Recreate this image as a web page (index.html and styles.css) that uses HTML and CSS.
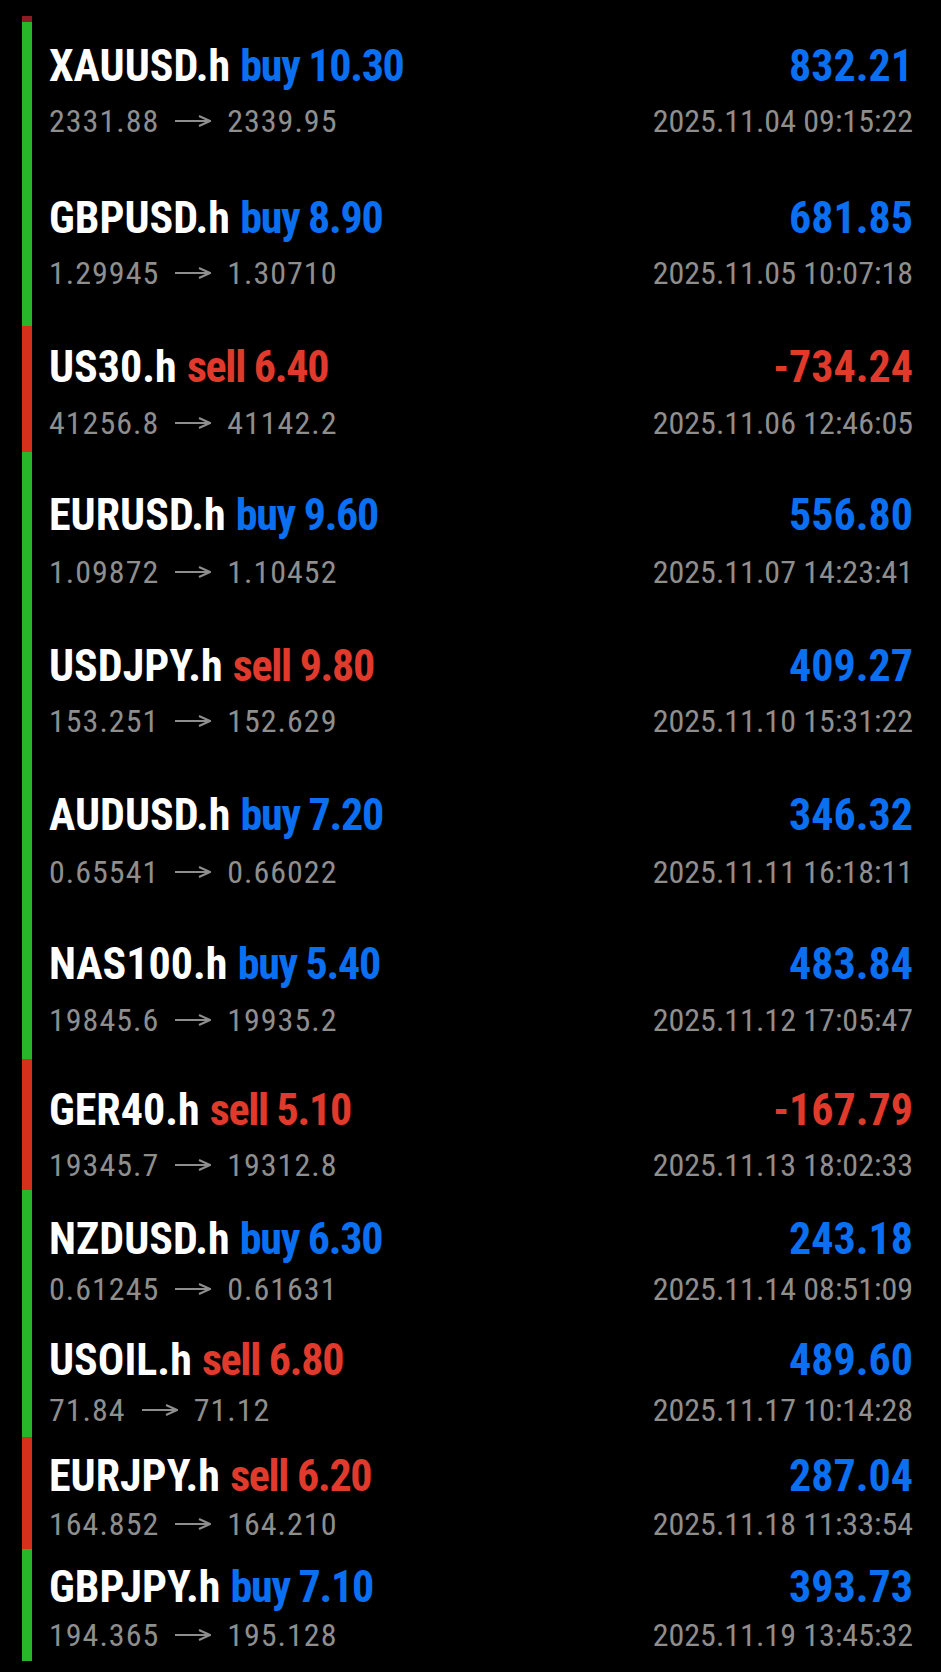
FILE: index.html
```html
<!DOCTYPE html>
<html>
<head>
    <title>Closed Positions</title>
    <link rel="stylesheet" href="styles.css">
</head>
<body>

    <div class="trades">
        <div class="trade">
            <div class="top"><span><span class="symbol">XAUUSD.h</span> <span class="buy side">buy 10.30</span></span><span class="buy">832.21</span></div>
            <div class="bottom"><span class="prices">2331.88 <svg class="arrow" viewBox="0 0 36 12"><path d="M0 6H35M24 1L35 6L24 11"/></svg> 2339.95</span><span>2025.11.04 09:15:22</span></div>
        </div>
        <div class="trade">
            <div class="top"><span><span class="symbol">GBPUSD.h</span> <span class="buy side">buy 8.90</span></span><span class="buy">681.85</span></div>
            <div class="bottom"><span class="prices">1.29945 <svg class="arrow" viewBox="0 0 36 12"><path d="M0 6H35M24 1L35 6L24 11"/></svg> 1.30710</span><span>2025.11.05 10:07:18</span></div>
        </div>
        <div class="trade red">
            <div class="top"><span><span class="symbol">US30.h</span> <span class="sell side">sell 6.40</span></span><span class="sell">-734.24</span></div>
            <div class="bottom"><span class="prices">41256.8 <svg class="arrow" viewBox="0 0 36 12"><path d="M0 6H35M24 1L35 6L24 11"/></svg> 41142.2</span><span>2025.11.06 12:46:05</span></div>
        </div>
        <div class="trade">
            <div class="top"><span><span class="symbol">EURUSD.h</span> <span class="buy side">buy 9.60</span></span><span class="buy">556.80</span></div>
            <div class="bottom"><span class="prices">1.09872 <svg class="arrow" viewBox="0 0 36 12"><path d="M0 6H35M24 1L35 6L24 11"/></svg> 1.10452</span><span>2025.11.07 14:23:41</span></div>
        </div>
        <div class="trade">
            <div class="top"><span><span class="symbol">USDJPY.h</span> <span class="sell side">sell 9.80</span></span><span class="buy">409.27</span></div>
            <div class="bottom"><span class="prices">153.251 <svg class="arrow" viewBox="0 0 36 12"><path d="M0 6H35M24 1L35 6L24 11"/></svg> 152.629</span><span>2025.11.10 15:31:22</span></div>
        </div>
        <div class="trade">
            <div class="top"><span><span class="symbol">AUDUSD.h</span> <span class="buy side">buy 7.20</span></span><span class="buy">346.32</span></div>
            <div class="bottom"><span class="prices">0.65541 <svg class="arrow" viewBox="0 0 36 12"><path d="M0 6H35M24 1L35 6L24 11"/></svg> 0.66022</span><span>2025.11.11 16:18:11</span></div>
        </div>
        <div class="trade">
            <div class="top"><span><span class="symbol">NAS100.h</span> <span class="buy side">buy 5.40</span></span><span class="buy">483.84</span></div>
            <div class="bottom"><span class="prices">19845.6 <svg class="arrow" viewBox="0 0 36 12"><path d="M0 6H35M24 1L35 6L24 11"/></svg> 19935.2</span><span>2025.11.12 17:05:47</span></div>
        </div>
        <div class="trade red">
            <div class="top"><span><span class="symbol">GER40.h</span> <span class="sell side">sell 5.10</span></span><span class="sell">-167.79</span></div>
            <div class="bottom"><span class="prices">19345.7 <svg class="arrow" viewBox="0 0 36 12"><path d="M0 6H35M24 1L35 6L24 11"/></svg> 19312.8</span><span>2025.11.13 18:02:33</span></div>
        </div>
        <div class="trade">
            <div class="top"><span><span class="symbol">NZDUSD.h</span> <span class="buy side">buy 6.30</span></span><span class="buy">243.18</span></div>
            <div class="bottom"><span class="prices">0.61245 <svg class="arrow" viewBox="0 0 36 12"><path d="M0 6H35M24 1L35 6L24 11"/></svg> 0.61631</span><span>2025.11.14 08:51:09</span></div>
        </div>
        <div class="trade">
            <div class="top"><span><span class="symbol">USOIL.h</span> <span class="sell side">sell 6.80</span></span><span class="buy">489.60</span></div>
            <div class="bottom"><span class="prices">71.84 <svg class="arrow" viewBox="0 0 36 12"><path d="M0 6H35M24 1L35 6L24 11"/></svg> 71.12</span><span>2025.11.17 10:14:28</span></div>
        </div>
        <div class="trade red">
            <div class="top"><span><span class="symbol">EURJPY.h</span> <span class="sell side">sell 6.20</span></span><span class="buy">287.04</span></div>
            <div class="bottom"><span class="prices">164.852 <svg class="arrow" viewBox="0 0 36 12"><path d="M0 6H35M24 1L35 6L24 11"/></svg> 164.210</span><span>2025.11.18 11:33:54</span></div>
        </div>
        <div class="trade">
            <div class="top"><span><span class="symbol">GBPJPY.h</span> <span class="buy side">buy 7.10</span></span><span class="buy">393.73</span></div>
            <div class="bottom"><span class="prices">194.365 <svg class="arrow" viewBox="0 0 36 12"><path d="M0 6H35M24 1L35 6L24 11"/></svg> 195.128</span><span>2025.11.19 13:45:32</span></div>
        </div>
    </div>

</body>
</html>
```

FILE: styles.css
```css
body {
    background-color: #000;
    color: #fff;
    font-family: "Liberation Sans Narrow", "Roboto Condensed", "DejaVu Sans Condensed", "Liberation Sans", sans-serif;
    margin: 0;
}

.trades {
    padding: 16px 28px 0 22px;
}

/* dark tick above the bar */
.trades::before {
    content: "";
    display: block;
    width: 10px;
    height: 6px;
    background-color: #8a1c22;
}

.trade {
    box-sizing: border-box;
    border-left: 10px solid #27b52a;
    padding-left: 17px;
    padding-top: 28px;
    height: 149px;
}

.trade.red {
    border-left-color: #d5301c;
}

.top {
    display: flex;
    justify-content: space-between;
    align-items: baseline;
    font-size: 44px;
    line-height: 44px;
    font-weight: bold;
    white-space: nowrap;
}

.symbol {
    color: #fff;
}

.side {
    letter-spacing: -1.3px;
}

.buy {
    color: #0b6ff2;
}

.sell {
    color: #e03a2c;
}

.bottom {
    display: flex;
    justify-content: space-between;
    align-items: center;
    font-size: 32px;
    line-height: 32px;
    color: #8e8e8e;
    margin-top: 16px;
    white-space: nowrap;
}

.prices {
    display: flex;
    align-items: center;
    gap: 16px;
    letter-spacing: 1px;
}

.arrow {
    width: 36px;
    height: 12px;
    fill: none;
    stroke: #8e8e8e;
    stroke-width: 2;
}

/* spacing per row, as captured */
.trade:nth-child(1) { height: 144px; padding-top: 22px; }
.trade:nth-child(2) { height: 160px; padding-top: 30px; }
.trade:nth-child(3) { height: 126px; padding-top: 19px; }
.trade:nth-child(4) { height: 162px; padding-top: 41px; }
.trade:nth-child(5) { height: 149px; padding-top: 30px; }
.trade:nth-child(6) { height: 149px; padding-top: 30px; }
.trade:nth-child(7) { height: 147px; padding-top: 30px; }
.trade:nth-child(8) { height: 131px; padding-top: 29px; }
.trade:nth-child(9) { height: 131px; padding-top: 27px; }
.trade:nth-child(10) { height: 116px; padding-top: 17px; }
.trade:nth-child(11) { height: 112px; padding-top: 17px; }
.trade:nth-child(12) { height: 112px; padding-top: 16px; }

.trade:nth-child(1) .bottom { margin-top: 17px; }
.trade:nth-child(2) .bottom { margin-top: 17px; }
.trade:nth-child(3) .bottom { margin-top: 18px; }
.trade:nth-child(4) .bottom { margin-top: 19px; }
.trade:nth-child(5) .bottom { margin-top: 17px; }
.trade:nth-child(6) .bottom { margin-top: 19px; }
.trade:nth-child(7) .bottom { margin-top: 18px; }
.trade:nth-child(8) .bottom { margin-top: 17px; }
.trade:nth-child(9) .bottom,
.trade:nth-child(10) .bottom { margin-top: 12px; }
.trade:nth-child(11) .bottom,
.trade:nth-child(12) .bottom { margin-top: 10px; }
```
